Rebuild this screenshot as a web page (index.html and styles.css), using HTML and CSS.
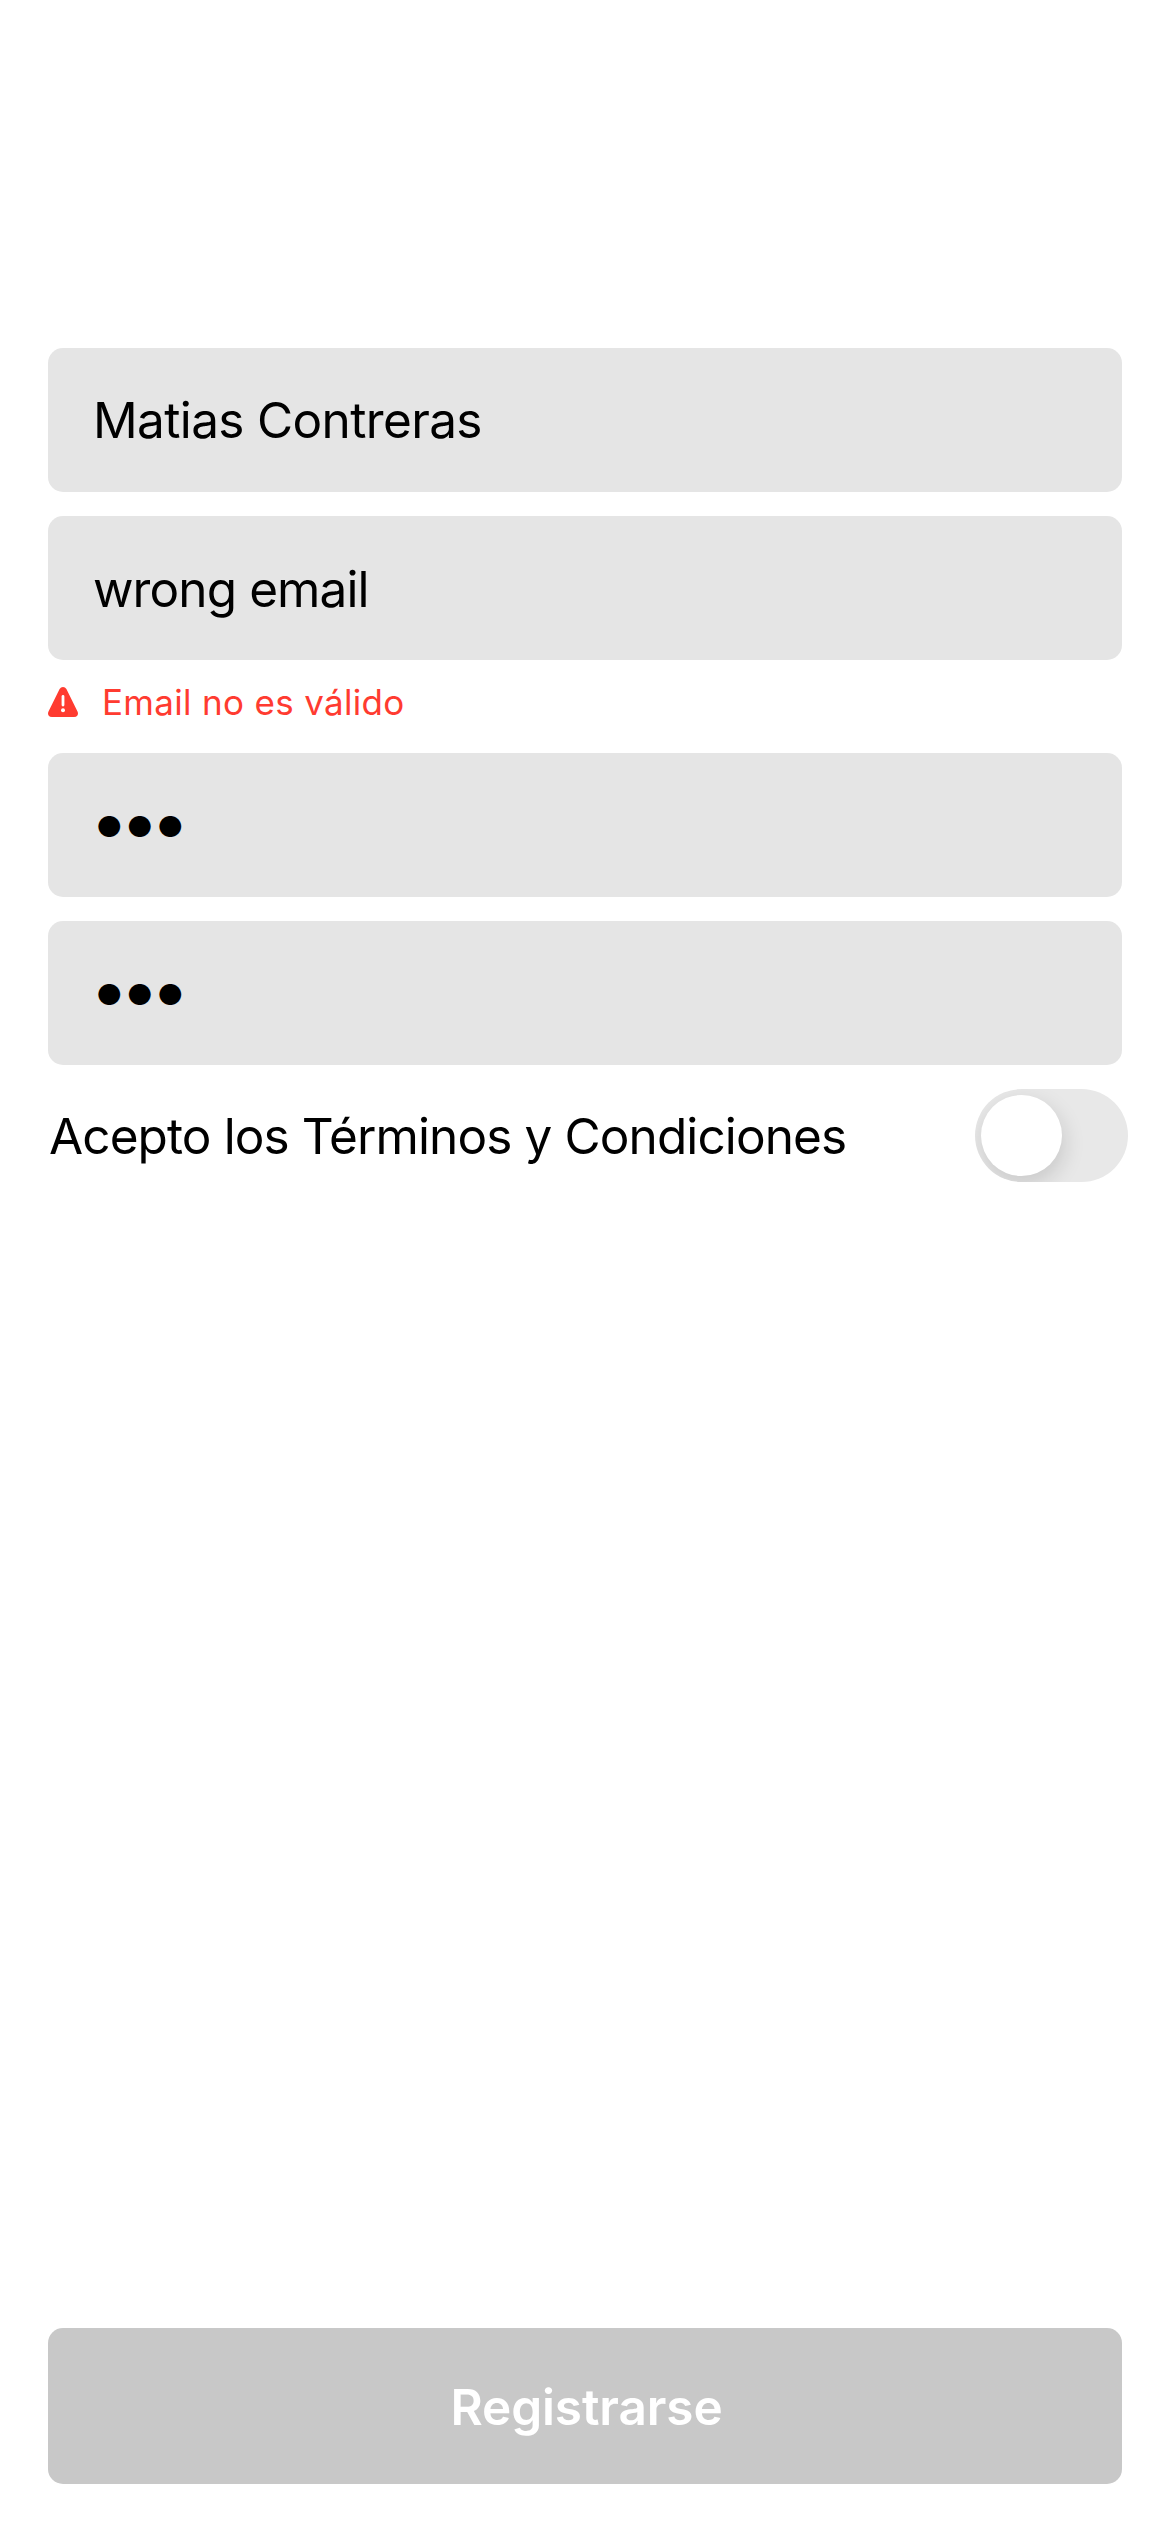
FILE: index.html
```html
<!DOCTYPE html>
<html lang="es">
<head>
<meta charset="utf-8">
<title>Registro</title>
<link rel="stylesheet" href="styles.css">
</head>
<body>
<main class="screen">
  <form class="form">
    <div class="field field-name">Matias Contreras</div>
    <div class="field field-email">wrong email</div>
    <div class="error">
      <svg class="error-icon" viewBox="0 0 30 30" aria-hidden="true">
        <path fill="#ff3b30" d="M11.6 1.9Q12.8 0 15 0T18.4 1.9L29.5 24.4Q30.5 26.800 29.400 28.400Q28.300 30 26 30H4Q1.700 30 .6 28.400Q-.5 26.800 .5 24.400Z"/>
        <path d="M15 9.500V18" stroke="#fff" stroke-width="2.800" stroke-linecap="round"/>
        <circle cx="15" cy="23.200" r="2" fill="#fff"/>
      </svg>
      <span class="error-text">Email no es válido</span>
    </div>
    <div class="field field-secret"><span class="dots">●●●</span></div>
    <div class="field field-secret"><span class="dots">●●●</span></div>
    <div class="terms">
      <span class="terms-label">Acepto los Términos y Condiciones</span>
      <span class="switch" role="switch" aria-checked="false"><span class="knob"></span></span>
    </div>
  </form>
  <button class="submit" type="button" disabled>Registrarse</button>
</main>
</body>
</html>
```
FILE: styles.css
```css
* { box-sizing: border-box; }

body {
  margin: 0;
  background: #fff;
  color: #000;
  font-family: Inter, "Liberation Sans", sans-serif;
  font-size: 49.5px;
  line-height: 60px;
}

.screen {
  display: flex;
  flex-direction: column;
  justify-content: space-between;
  height: 2532px;
  padding: 348px 48px 48px;
}

.form {
  display: flex;
  flex-direction: column;
}

.field {
  display: flex;
  align-items: center;
  height: 144px;
  margin-bottom: 24px;
  padding-left: 45px;
  border-radius: 15px;
  background: #e5e5e5;
  white-space: nowrap;
}

.field-name { letter-spacing: -0.64px; }

.field-email {
  padding-top: 2px;
  letter-spacing: -0.9px;
}

.field-secret { padding-top: 3px; }

.dots {
  padding-left: 3px;
  font-size: 29px;
  letter-spacing: 4px;
}

.error {
  display: flex;
  align-items: center;
  gap: 24px;
  height: 36px;
  margin-bottom: 33px;
  color: #ff3b30;
  font-size: 35px;
  line-height: 45px;
  letter-spacing: 0.32px;
}

.error-icon {
  width: 30px;
  height: 30px;
}

.terms {
  display: flex;
  align-items: center;
  justify-content: space-between;
  height: 93px;
  margin-right: -6px;
}

.terms-label {
  padding-left: 1px;
  letter-spacing: -0.89px;
}

.switch {
  display: flex;
  align-items: center;
  width: 153px;
  height: 93px;
  padding: 6px;
  border-radius: 47px;
  background: #e8e8e8;
  overflow: hidden;
}

.knob {
  width: 81px;
  height: 81px;
  border-radius: 50%;
  background: #fff;
  box-shadow: 2px 8px 22px rgba(0, 0, 0, 0.14);
}

.submit {
  height: 156px;
  padding: 2px 0 0 3px;
  border: 0;
  border-radius: 15px;
  background: #c8c8c8;
  color: #fff;
  font: 600 49.5px/60px Inter, "Liberation Sans", sans-serif;
  letter-spacing: -0.1px;
}
```
